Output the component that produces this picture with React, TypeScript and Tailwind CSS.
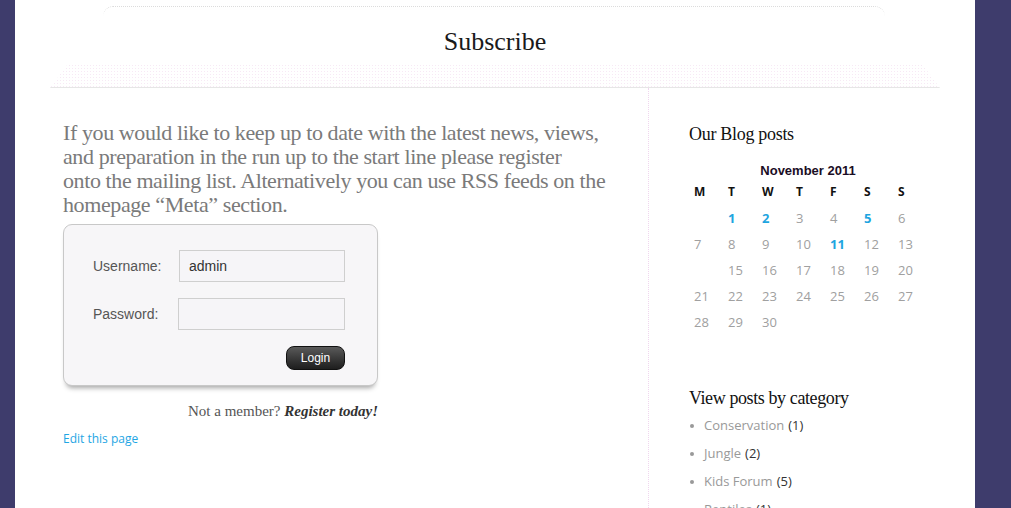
import React from 'react'

const serif = "font-['Liberation_Serif','DejaVu_Serif',serif]"
const open = "font-['Open_Sans','DejaVu_Sans',sans-serif]"
const arial = "font-['Liberation_Sans',Arial,sans-serif]"

const weeks: (number | null)[][] = [
  [null, 1, 2, 3, 4, 5, 6],
  [7, 8, 9, 10, 11, 12, 13],
  [null, 15, 16, 17, 18, 19, 20],
  [21, 22, 23, 24, 25, 26, 27],
  [28, 29, 30, null, null, null, null],
]
const linked = [1, 2, 5, 11]

const categories = [
  { name: 'Conservation', count: 1 },
  { name: 'Jungle', count: 2 },
  { name: 'Kids Forum', count: 5 },
  { name: 'Reptiles', count: 1 },
]

function Calendar() {
  return (
    <div className="ml-[5px] w-[238px]">
      <div className={`${arial} text-center text-[13px] font-bold text-[#1a0d24] leading-[16px] ml-[-10px]`}>
        November 2011
      </div>
      <div className={`${open} grid grid-cols-7`}>
        {['M', 'T', 'W', 'T', 'F', 'S', 'S'].map((d, i) => (
          <div key={i} className="h-[26px] leading-[26px] text-[12px] font-bold text-[#111]">
            {d}
          </div>
        ))}
        {weeks.flat().map((n, i) => (
          <div
            key={i}
            className={`h-[26px] leading-[26px] text-[13px] ${
              n !== null && linked.includes(n) ? 'font-bold text-[#1ea5e0]' : 'text-[#a0a0a0]'
            }`}
          >
            {n ?? ''}
          </div>
        ))}
      </div>
    </div>
  )
}

function LoginBox() {
  return (
    <div className="w-[315px] h-[162px] rounded-[9px] border border-[#c8c8c8] bg-[#f7f6f8] shadow-[0_5px_5px_-3px_rgba(0,0,0,0.35)] pt-[25px] pl-[29px] pr-[32px]">
      <div className={`${arial} grid grid-cols-[86px_166px] items-center gap-y-[16px] text-[14px] text-[#555]`}>
        <span>Username:</span>
        <div className="h-[32px] border border-[#cfcfcf] bg-[#f6f5f8] px-[9px] leading-[30px] text-[#333]">admin</div>
        <span>Password:</span>
        <div className="h-[32px] border border-[#cfcfcf] bg-[#f6f5f8] -ml-px" />
      </div>
      <div className="flex justify-end mt-[16px]">
        <button
          className={`${arial} w-[59px] h-[24px] rounded-[8px] bg-gradient-to-b from-[#5a5a5a] to-[#1e1e1e] border border-[#111] text-white text-[12px] leading-[20px]`}
        >
          Login
        </button>
      </div>
    </div>
  )
}

export default function App() {
  return (
    <div className="w-[1011px] h-[508px] bg-[#3e3c6c] overflow-hidden">
      <div className="ml-[15px] w-[960px] h-[508px] bg-white">
        {/* header */}
        <div className="relative h-[88px]">
          <div className="absolute left-[88px] right-[90px] top-[6px] h-[10px] border-t border-dotted border-[#dcdcdc] rounded-t-[10px]" />
          <h1 className={`${serif} pt-[26px] text-center text-[26px] leading-[32px] text-[#1a1a1a]`}>Subscribe</h1>
          <div className="absolute left-[35px] right-[35px] bottom-0 h-[24px] border-b border-[#e6e6e6] bg-[radial-gradient(#f7e9f5_0.7px,transparent_0.8px)] bg-[length:3px_3px] [clip-path:polygon(2%_0,98%_0,100%_100%,0_100%)]" />
        </div>

        <div className="flex h-[420px]">
          {/* main column */}
          <div className="w-[633px] pl-[48px] pt-[33px]">
            <p className={`${serif} w-[565px] text-[22px] leading-[24px] text-[#7a7a7a] tracking-[-0.4px]`}>
              If you would like to keep up to date with the latest news, views,
              <br />
              and preparation in the run up to the start line please register
              <br />
              onto the mailing list. Alternatively you can use RSS feeds on the
              <br />
              homepage “Meta” section.
            </p>
            <div className="mt-[7px]">
              <LoginBox />
            </div>
            <div className={`${serif} w-[315px] text-right mt-[17px] text-[15px] leading-[16px] text-[#555]`}>
              Not a member? <span className="font-bold italic text-[#333]">Register today!</span>
            </div>
            <a className={`${open} block mt-[12px] text-[12px] leading-[16px] text-[#1fa6e4]`}>Edit this page</a>
          </div>

          {/* sidebar */}
          <div className="flex-1 border-l border-dotted border-[#f0d6ee] pl-[40px] pt-[34px]">
            <h2 className={`${serif} text-[18px] leading-[24px] tracking-[-0.3px] text-[#111]`}>Our Blog posts</h2>
            <div className="mt-[17px]">
              <Calendar />
            </div>
            <h2 className={`${serif} mt-[51px] text-[18px] leading-[24px] tracking-[-0.4px] text-[#111]`}>View posts by category</h2>
            <ul className={`${open} mt-[2px] text-[13px]`}>
              {categories.map((c) => (
                <li key={c.name} className="flex items-center h-[28px]">
                  <span className="w-[4px] h-[4px] rounded-full bg-[#999] ml-[1px] mr-[10px]" />
                  <span className="text-[#999]">{c.name}</span>
                  <span className="ml-[4px] text-[#333]">({c.count})</span>
                </li>
              ))}
            </ul>
          </div>
        </div>
      </div>
    </div>
  )
}
